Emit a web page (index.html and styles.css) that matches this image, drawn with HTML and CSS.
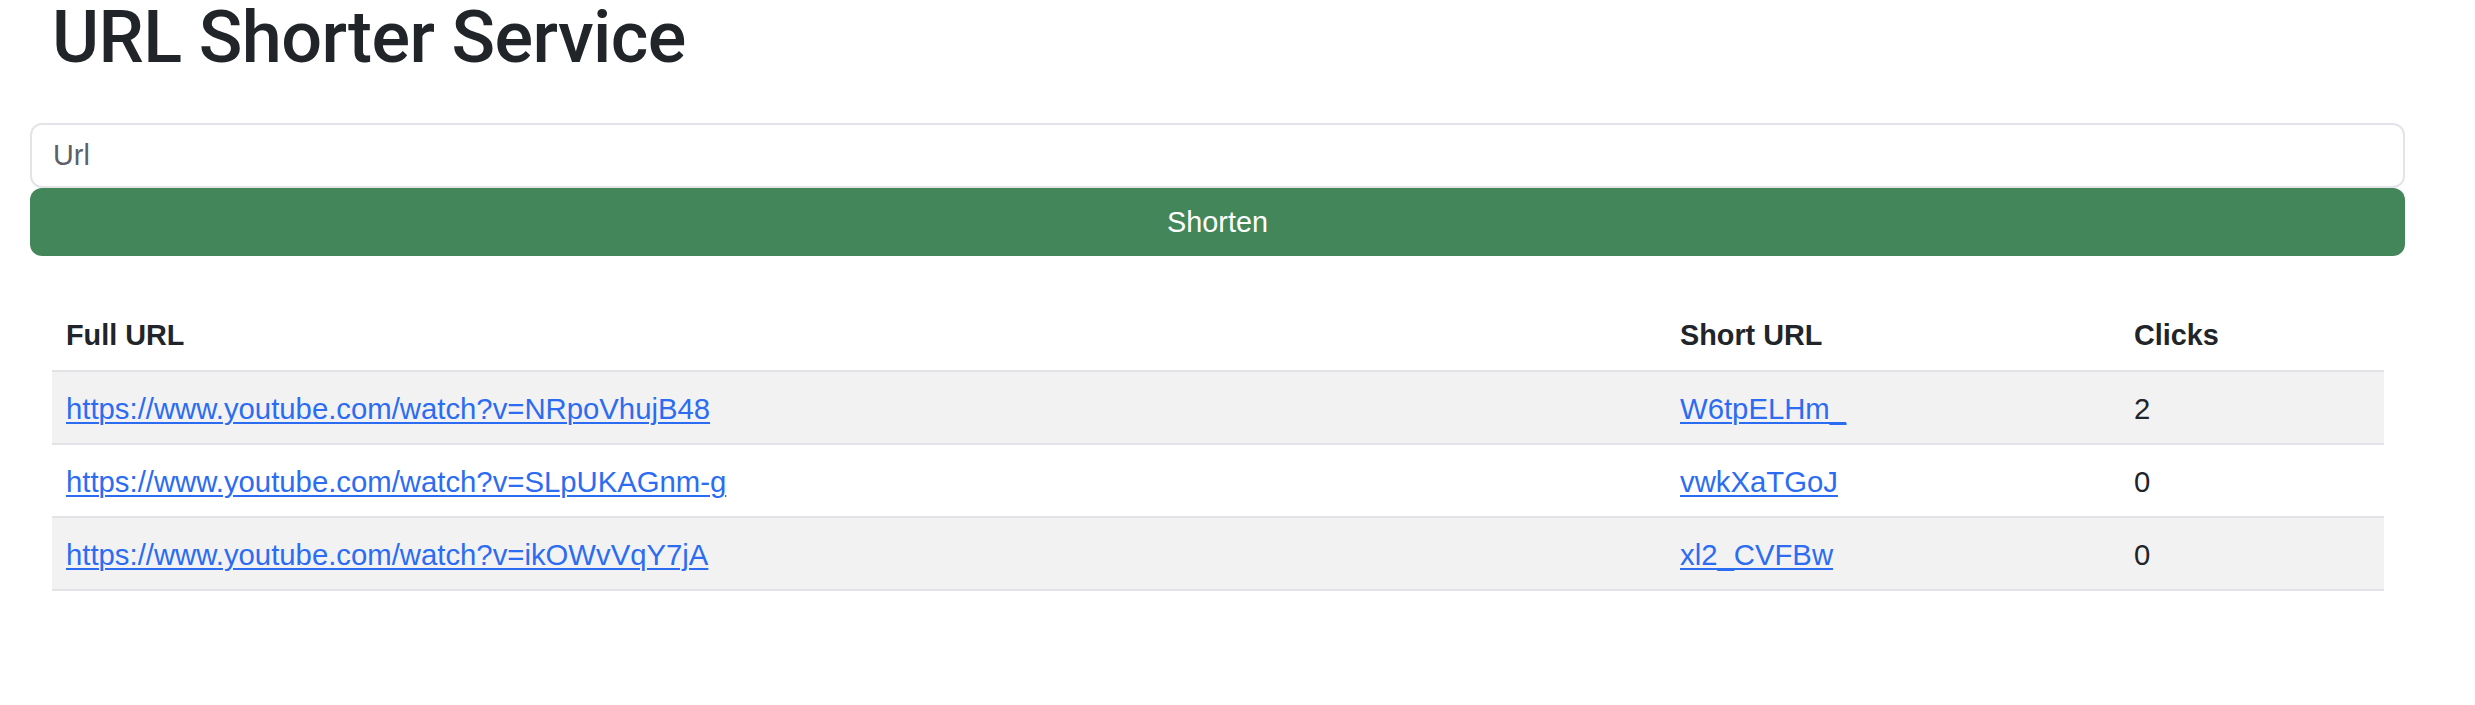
FILE: index.html
```html
<!DOCTYPE html>
<html lang="en">
<head>
<meta charset="utf-8">
<title>URL Shorter Service</title>
<link rel="stylesheet" href="styles.css">
</head>
<body>
<main class="page">
  <h1 class="title">URL Shorter Service</h1>
  <form class="shorten-form">
    <input class="url-input" type="text" placeholder="Url">
    <button class="shorten-btn" type="button">Shorten</button>
  </form>
  <table class="url-table">
    <colgroup>
      <col class="col-full">
      <col class="col-short">
      <col class="col-clicks">
    </colgroup>
    <thead>
      <tr><th>Full URL</th><th>Short URL</th><th>Clicks</th></tr>
    </thead>
    <tbody>
      <tr class="striped"><td><a href="#">https://www.youtube.com/watch?v=NRpoVhujB48</a></td><td><a href="#">W6tpELHm_</a></td><td>2</td></tr>
      <tr><td><a href="#">https://www.youtube.com/watch?v=SLpUKAGnm-g</a></td><td><a href="#">vwkXaTGoJ</a></td><td>0</td></tr>
      <tr class="striped"><td><a href="#">https://www.youtube.com/watch?v=ikOWvVqY7jA</a></td><td><a href="#">xl2_CVFBw</a></td><td>0</td></tr>
    </tbody>
  </table>
</main>
</body>
</html>
```
FILE: styles.css
```css
* { box-sizing: border-box; }

html, body {
  margin: 0;
  background: #ffffff;
}

body {
  font-family: "Liberation Sans", Arial, sans-serif;
  font-size: 28.8px;
  color: #212529;
}

.page {
  padding: 0 70px 0 30px;
}

.title {
  margin: 0 0 47px 22px;
  font-family: Roboto, "Liberation Sans", Arial, sans-serif;
  font-size: 72px;
  font-weight: 500;
  line-height: 76px;
  letter-spacing: -0.6px;
  color: #212529;
}

.shorten-form {
  display: flex;
  flex-direction: column;
}

.url-input {
  display: block;
  width: 100%;
  height: 65px;
  padding: 0 21px;
  border: 2px solid #e2e4e7;
  border-radius: 12px;
  font-family: inherit;
  font-size: 28.8px;
  color: #212529;
  background: #fff;
  outline: none;
}

.url-input::placeholder {
  color: #5d6166;
  opacity: 1;
}

.shorten-btn {
  display: block;
  width: 100%;
  height: 68px;
  border: none;
  border-radius: 12px;
  background: #42865a;
  color: #ffffff;
  font-family: inherit;
  font-size: 28.8px;
  cursor: pointer;
}

.url-table {
  margin: 43px 21px 0 22px;
  width: calc(100% - 43px);
  border-collapse: collapse;
  table-layout: fixed;
}

.col-full { width: 1614px; }
.col-short { width: 454px; }
.col-clicks { width: auto; }

.url-table th,
.url-table td {
  padding: 15px 14px 13px;
  line-height: 43px;
  text-align: left;
  border-bottom: 2px solid #e1e3e6;
  white-space: nowrap;
}

.url-table td {
  font-size: 29.3px;
}

.url-table th {
  font-weight: 700;
}

.url-table .striped td {
  background: #f2f2f2;
}

.url-table a {
  color: #2c6cf3;
  text-decoration: underline;
  text-decoration-thickness: 2px;
  text-underline-offset: 3px;
}
```
